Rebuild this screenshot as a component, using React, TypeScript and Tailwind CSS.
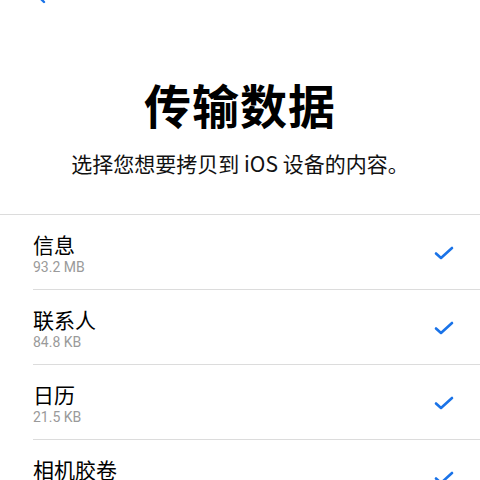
import React from 'react';

const items = [
  { name: '信息', size: '93.2 MB' },
  { name: '联系人', size: '84.8 KB' },
  { name: '日历', size: '21.5 KB' },
  { name: '相机胶卷', size: '1.2 GB' },
];

const Check = () => (
  <svg width="20" height="16" viewBox="0 0 20 16" fill="none">
    <path d="M2 8.5 L7 13 L18 3" stroke="#1a73e8" strokeWidth="2.6" strokeLinecap="round" strokeLinejoin="round" />
  </svg>
);

export default function App() {
  return (
    <div
      className="w-[480px] h-[480px] overflow-hidden bg-white text-black relative"
      style={{ fontFamily: '"Noto Sans CJK SC", Roboto, sans-serif' }}
    >
      <svg className="absolute left-[30px] top-[-16px]" width="20" height="20" viewBox="0 0 20 20" fill="none">
        <path d="M14 2 L6 10 L14 18" stroke="#1a73e8" strokeWidth="2.4" strokeLinecap="round" strokeLinejoin="round" />
      </svg>

      <div className="pt-[72px] flex flex-col items-center">
        <h1 className="text-[47px] font-bold leading-[64px] tracking-[1px]">传输数据</h1>
        <p className="mt-[12px] text-[21px] leading-[30px] text-[#111]">选择您想要拷贝到 iOS 设备的内容。</p>
      </div>

      <div className="mt-[36px] border-t border-[#dcdcdc]">
        {items.map((item, i) => (
          <div key={i} className="ml-[33px] h-[75px] flex items-center border-b border-[#dcdcdc]">
            <div className="flex-1 flex flex-col pt-[3px]">
              <span className="text-[21px] leading-[27px]">{item.name}</span>
              <span className="text-[14px] leading-[19px] text-[#9a9a9a]" style={{ fontFamily: 'Roboto, sans-serif' }}>{item.size}</span>
            </div>
            <div className="mr-[26px] mt-[2px]">
              <Check />
            </div>
          </div>
        ))}
      </div>
    </div>
  );
}
